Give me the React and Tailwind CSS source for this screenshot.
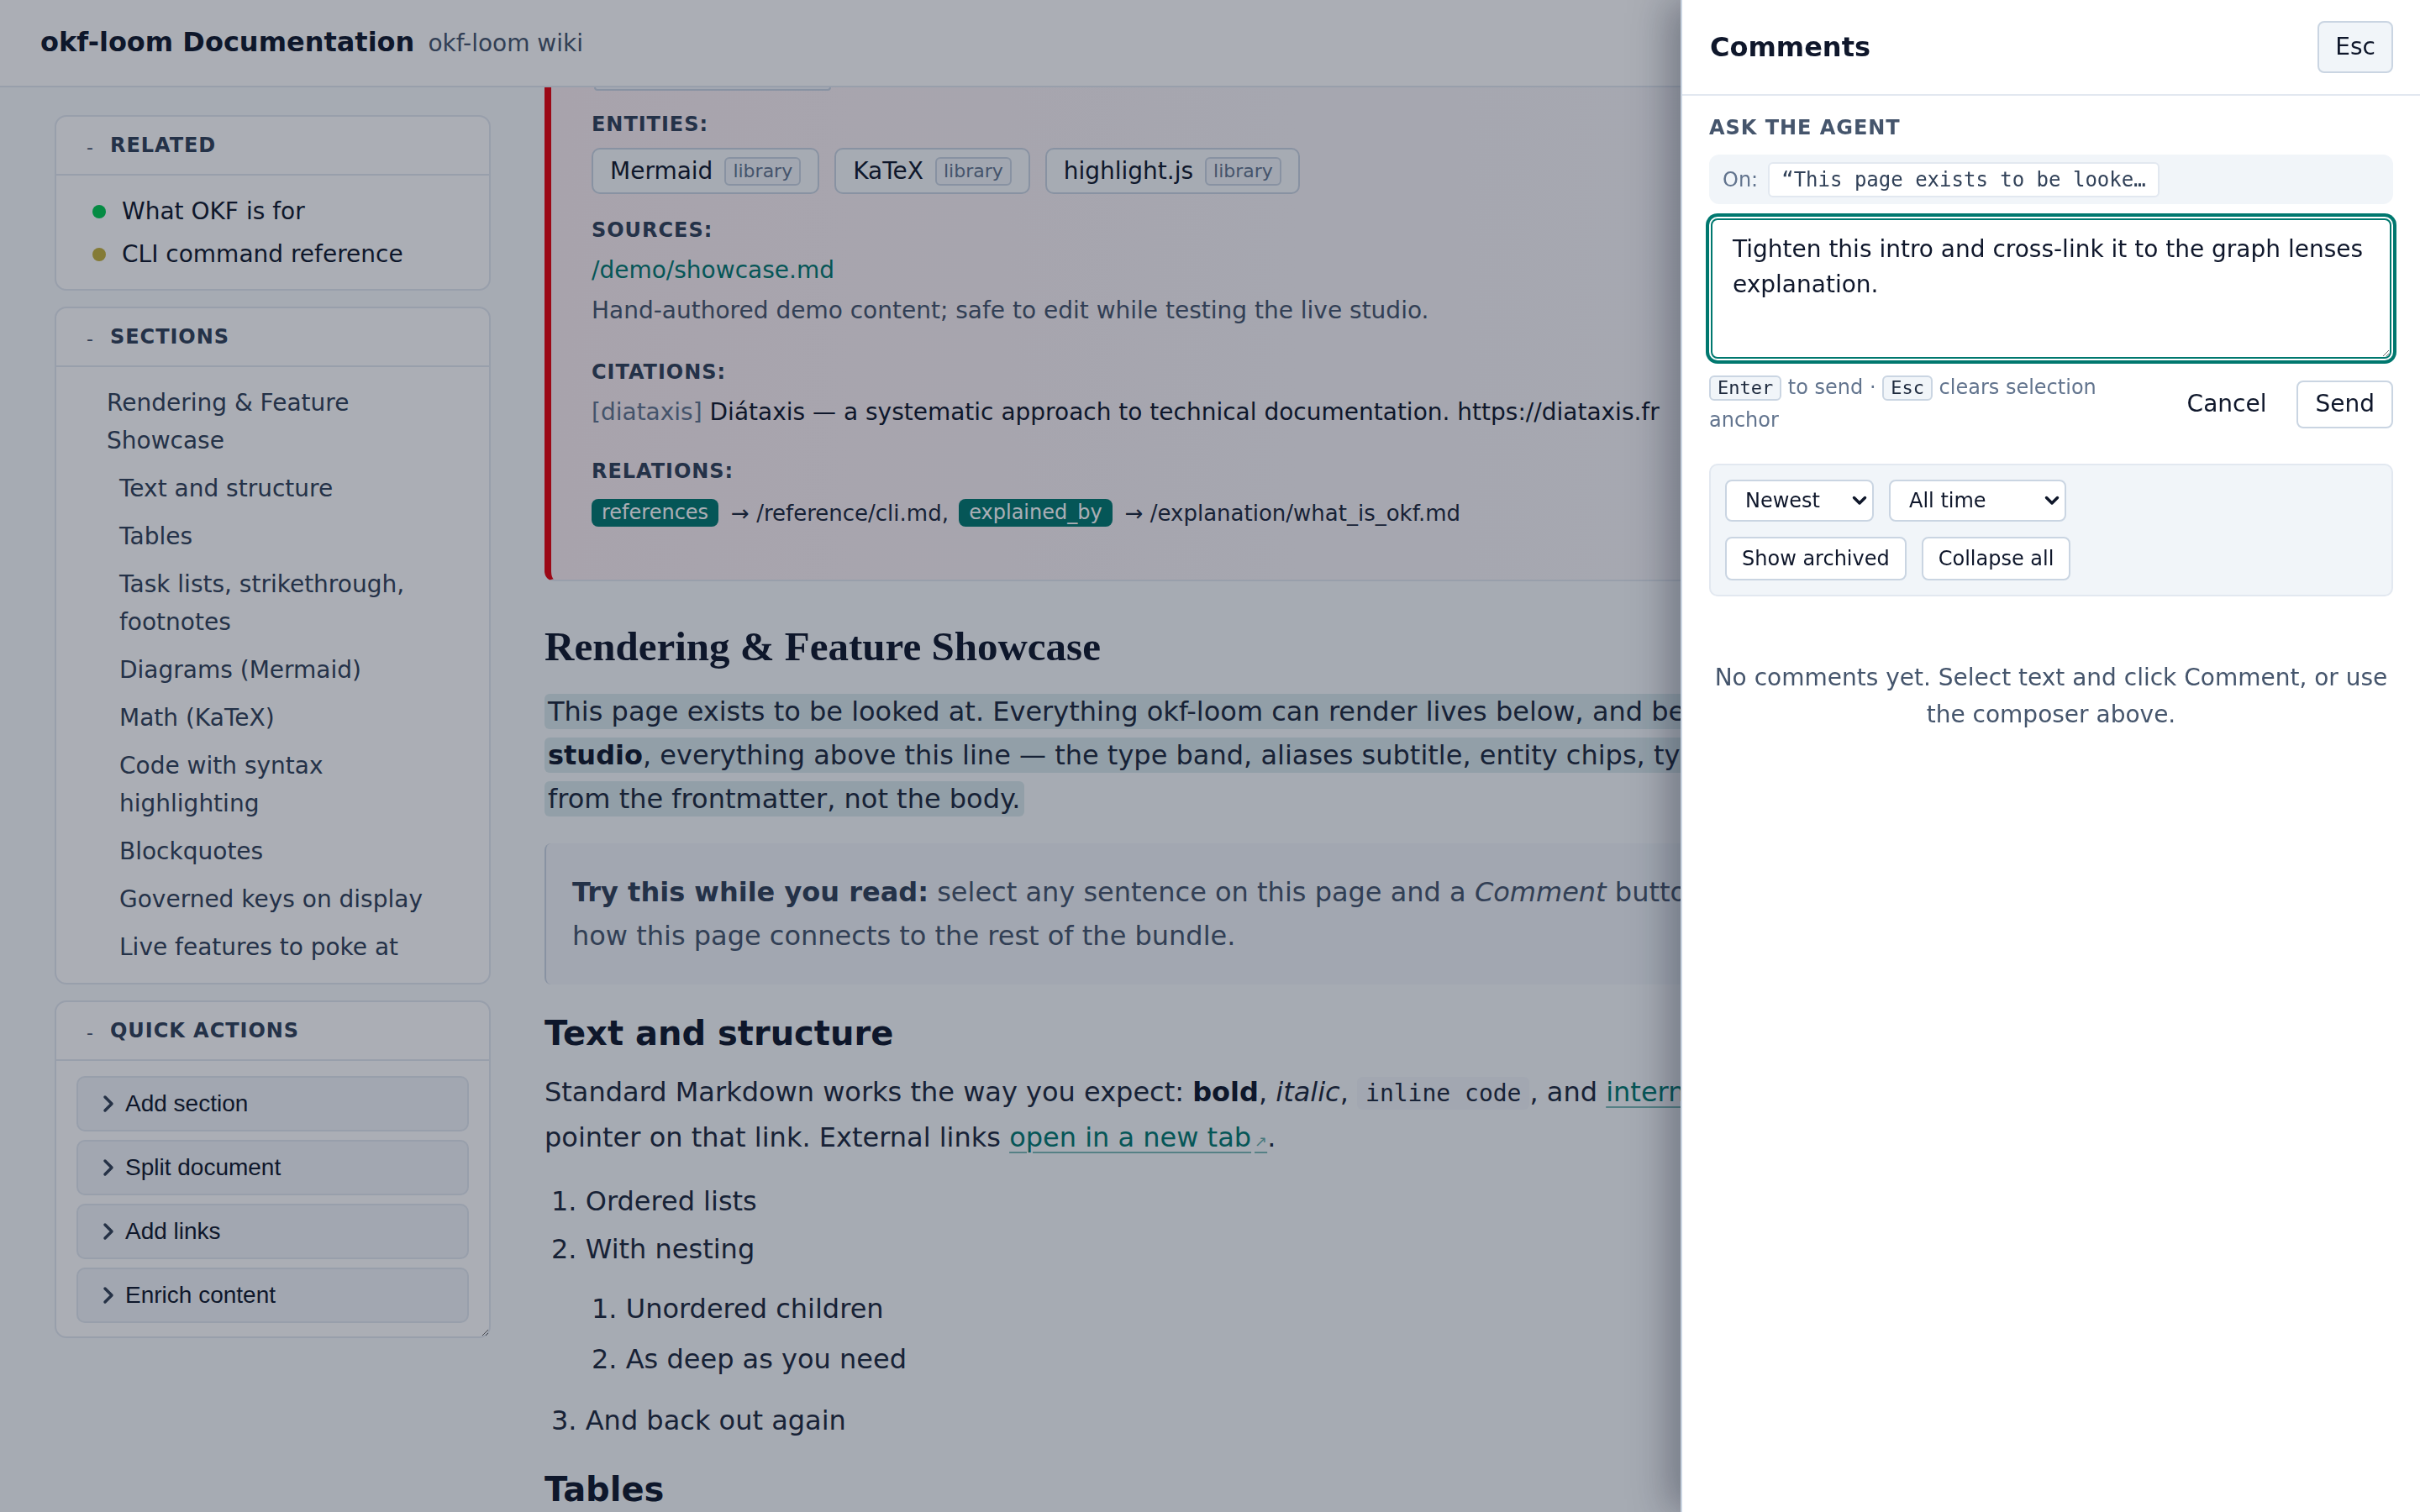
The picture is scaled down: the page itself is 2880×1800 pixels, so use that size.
import React from "react";

function SideCard({ title, children, extra = "" }) {
  return (
    <section className={"rounded-[14px] border-2 border-slate-200 bg-white " + extra}>
      <div className="flex h-[70px] items-center gap-[20px] border-b-2 border-slate-200 pl-[36px]">
        <span className="translate-y-[3px] text-[22px] leading-none text-slate-600">-</span>
        <span className="text-[24px] font-bold uppercase leading-[32px] tracking-[0.04em] text-slate-700">{title}</span>
      </div>
      {children}
    </section>
  );
}

function Chevron() {
  return (
    <svg width="16" height="24" viewBox="0 0 16 24" className="shrink-0">
      <path d="M4 4l8 8-8 8" fill="none" stroke="#334155" strokeWidth="3.5" strokeLinecap="round" strokeLinejoin="round" />
    </svg>
  );
}

function QuickButton({ label }) {
  return (
    <button className="flex h-[66px] w-full items-center gap-[12px] rounded-[10px] border-2 border-slate-200 bg-slate-100 pl-[28px] text-left font-['Liberation_Sans',Arial,sans-serif] text-[28px] text-slate-900">
      <Chevron />
      <span>{label}</span>
    </button>
  );
}

function EntityChip({ name }) {
  return (
    <div className="flex h-[55px] items-center gap-[14px] rounded-[10px] border-2 border-slate-300 bg-slate-50 px-[20px]">
      <span className="text-[28px] leading-[40px] text-slate-900">{name}</span>
      <span className="rounded-[6px] border-2 border-slate-300 bg-slate-100 px-[8px] text-[22px] leading-[30px] text-slate-500">library</span>
    </div>
  );
}

function Label({ children, extra = "" }) {
  return (
    <div className={"text-[24px] font-bold uppercase leading-[32px] tracking-[0.04em] text-slate-700 " + extra}>{children}</div>
  );
}

function SelectBox({ width, options }) {
  return (
    <div className="relative">
      <select className={"h-[50px] appearance-none rounded-[8px] border-2 border-slate-300 bg-white pl-[22px] text-[24px] text-slate-900 " + width}>
        {options.map((o) => (
          <option key={o}>{o}</option>
        ))}
      </select>
      <svg
        width="18"
        height="12"
        viewBox="0 0 18 12"
        className="pointer-events-none absolute right-[8px] top-1/2 -translate-y-1/2"
      >
        <path d="M2.5 2.5l6.5 6.5 6.5-6.5" fill="none" stroke="#0f172a" strokeWidth="3.5" strokeLinecap="round" strokeLinejoin="round" />
      </svg>
    </div>
  );
}

export default function App() {
  const sections = [
    { t: "Rendering & Feature Showcase", top: true },
    { t: "Text and structure" },
    { t: "Tables" },
    { t: "Task lists, strikethrough, footnotes" },
    { t: "Diagrams (Mermaid)" },
    { t: "Math (KaTeX)" },
    { t: "Code with syntax highlighting" },
    { t: "Blockquotes" },
    { t: "Governed keys on display" },
    { t: "Live features to poke at" },
  ];

  return (
    <div className="relative h-screen w-full overflow-hidden bg-slate-50 font-['DejaVu_Sans',sans-serif] text-slate-800">
      {/* Top bar */}
      <header className="flex h-[104px] items-center border-b-2 border-slate-200 bg-white px-[48px]">
        <div className="flex items-baseline gap-[16px]">
          <h1 className="text-[32px] font-bold leading-[40px] text-slate-900">okf-loom Documentation</h1>
          <span className="text-[28px] leading-[40px] text-slate-600">okf-loom wiki</span>
        </div>
      </header>

      <div className="flex">
        {/* Sidebar */}
        <aside className="flex w-[584px] shrink-0 flex-col gap-[19px] pl-[65px] pt-[33px]">
          <SideCard title="Related">
            <ul className="flex flex-col gap-[6px] pb-[19px] pl-[43px] pt-[20px]">
              <li className="flex items-center gap-[19px] text-[28px] leading-[45px] text-slate-900">
                <span className="h-[16px] w-[16px] rounded-full bg-green-500" />
                What OKF is for
              </li>
              <li className="flex items-center gap-[19px] text-[28px] leading-[45px] text-slate-900">
                <span className="h-[16px] w-[16px] rounded-full bg-[#c4b13c]" />
                CLI command reference
              </li>
            </ul>
          </SideCard>

          <SideCard title="Sections">
            <ul className="flex flex-col pb-[14px] pl-[60px] pr-[41px] pt-[14px] text-[28px] leading-[45px] text-slate-700">
              {sections.map((s) => (
                <li key={s.t} className={s.top ? "py-[6px]" : "py-[6px] pl-[15px]"}>
                  {s.t}
                </li>
              ))}
            </ul>
          </SideCard>

          <SideCard title="Quick actions" extra="resize-y overflow-hidden">
            <div className="flex flex-col gap-[10px] px-[24px] pb-[16px] pt-[18px]">
              <QuickButton label="Add section" />
              <QuickButton label="Split document" />
              <QuickButton label="Add links" />
              <QuickButton label="Enrich content" />
            </div>
          </SideCard>
        </aside>

        {/* Main article */}
        <main className="min-w-0 flex-1 pl-[64px] pr-[96px]">
          <div className="rounded-bl-[12px] border-b-2 border-l-8 border-slate-200 border-l-red-600 bg-linear-to-r from-[#fbeff2] via-[#f7f5f8] to-[#f8fafc] pb-[55px] pl-[48px]">
            <div className="ml-[3px] h-[4px] w-[282px] rounded-b-[8px] border-2 border-t-0 border-slate-300 bg-slate-100" />
            <Label extra="mt-[24px]">Entities:</Label>
            <div className="mt-[12px] flex gap-[18px]">
              <EntityChip name="Mermaid" />
              <EntityChip name="KaTeX" />
              <EntityChip name="highlight.js" />
            </div>

            <Label extra="mt-[27px]">Sources:</Label>
            <div className="mt-[8px] text-[28px] leading-[48px] text-teal-700">/demo/showcase.md</div>
            <div className="text-[28px] leading-[48px] text-slate-600">
              Hand-authored demo content; safe to edit while testing the live studio.
            </div>

            <Label extra="mt-[33px]">Citations:</Label>
            <div className="mt-[8px] whitespace-nowrap text-[28px] leading-[48px] text-slate-900">
              <span className="text-slate-500">[diataxis]</span> Diátaxis — a systematic approach to technical documentation. https://diataxis.fr
            </div>

            <Label extra="mt-[30px]">Relations:</Label>
            <div className="mt-[8px] whitespace-nowrap text-[26px] leading-[48px] text-slate-800">
              <span className="inline-block rounded-[8px] bg-teal-700 px-[12px] align-middle text-[24px] leading-[33px] text-white">references</span>
              <span className="ml-[15px] align-middle">→ /reference/cli.md, </span>
              <span className="ml-[4px] inline-block rounded-[8px] bg-teal-700 px-[12px] align-middle text-[24px] leading-[33px] text-white">explained_by</span>
              <span className="ml-[15px] align-middle">→ /explanation/what_is_okf.md</span>
            </div>
          </div>

          <h1 className="mt-[49px] font-['Liberation_Serif','Times_New_Roman',serif] text-[49px] font-bold leading-[58px] text-slate-900">
            Rendering &amp; Feature Showcase
          </h1>

          <p className="mt-[22px] whitespace-nowrap text-[32px] leading-[52px] text-slate-800">
            <span className="rounded-[6px] bg-[#d9e8eb] py-[2px] pl-[4px] pr-[2px]">
              This page exists to be looked at. Everything okf-loom can render lives below, and because it opens in the live
            </span>
            <br />
            <span className="rounded-[6px] bg-[#d9e8eb] py-[2px] pl-[4px] pr-[2px]">
              <strong className="font-bold text-slate-900">studio</strong>, everything above this line — the type band, aliases subtitle, entity chips, type chips — comes
            </span>
            <br />
            <span className="rounded-[6px] bg-[#d9e8eb] py-[2px] pl-[4px] pr-[4px]">from the frontmatter, not the body.</span>
          </p>

          <blockquote className="mt-[27px] whitespace-nowrap rounded-[8px] border-l-2 border-slate-300 bg-slate-100 px-[31px] py-[32px] text-[32px] leading-[52px] text-slate-600">
            <strong className="font-bold text-slate-700">Try this while you read:</strong> select any sentence on this page and a{" "}
            <em>Comment</em> button appears; the sidebar shows
            <br />
            how this page connects to the rest of the bundle.
          </blockquote>

          <h2 className="mt-[32px] text-[40px] font-bold leading-[52px] text-slate-900">Text and structure</h2>

          <p className="mt-[18px] whitespace-nowrap text-[32px] leading-[52px] text-slate-800">
            Standard Markdown works the way you expect: <strong className="font-bold text-slate-900">bold</strong>, <em>italic</em>,{" "}
            <code className="rounded-[6px] bg-slate-100 px-[10px] py-[3px] font-['DejaVu_Sans_Mono',monospace] text-[28px] text-slate-800">inline code</code>, and{" "}
            <a className="text-teal-700 underline decoration-teal-700/50 decoration-2 underline-offset-[6px]">internal links</a> preview when you rest the
            <br />
            pointer on that link. External links{" "}
            <a className="text-teal-700 underline decoration-teal-700/50 decoration-2 underline-offset-[6px]">
              open in a new tab<span className="ml-[4px] text-[18px] text-teal-700/60">↗</span>
            </a>
            .
          </p>

          <ol className="mt-[19px] list-inside list-decimal space-y-[5px] pl-[8px] text-[32px] leading-[52px] text-slate-800">
            <li>Ordered lists</li>
            <li>
              With nesting
              <ol className="mb-[21px] mt-[19px] list-inside list-decimal space-y-[8px] pl-[48px]">
                <li>Unordered children</li>
                <li>As deep as you need</li>
              </ol>
            </li>
            <li>And back out again</li>
          </ol>

          <h2 className="mt-[30px] text-[40px] font-bold leading-[52px] text-slate-900">Tables</h2>
        </main>
      </div>

      {/* Modal backdrop */}
      <div className="fixed inset-0 bg-[rgba(15,23,42,0.35)]" />

      {/* Comments drawer */}
      <aside className="fixed right-0 top-0 flex h-screen w-[880px] flex-col border-l-2 border-slate-300 bg-white shadow-[-14px_0_44px_rgba(15,23,42,0.35)]">
        <div className="flex h-[114px] shrink-0 items-center justify-between border-b-2 border-slate-200 px-[32px]">
          <h2 className="pl-[1px] text-[32px] font-bold leading-[40px] text-slate-900">Comments</h2>
          <button className="h-[62px] rounded-[8px] border-2 border-slate-300 bg-slate-100 px-[19px] text-[28px] text-slate-900">Esc</button>
        </div>

        <div className="px-[32px]">
          <div className="mt-[22px] text-[24px] font-bold uppercase leading-[32px] tracking-[0.04em] text-slate-600">Ask the agent</div>

          <div className="mt-[16px] flex h-[59px] items-center gap-[12px] rounded-[12px] bg-slate-100 px-[16px]">
            <span className="text-[24px] text-slate-500">On:</span>
            <span className="flex h-[42px] items-center rounded-[6px] border-2 border-slate-200 bg-white px-[14px] font-['DejaVu_Sans_Mono',monospace] text-[24px] text-slate-700">
              “This page exists to be looke…
            </span>
          </div>

          <div className="mt-[17px] px-[2px]">
            <textarea
              className="block h-[167px] w-full rounded-[8px] border-2 border-teal-700 bg-white px-[24px] py-[14px] text-[28px] leading-[42px] text-slate-900 outline-none ring-4 ring-teal-700 ring-offset-2 ring-offset-white"
              defaultValue="Tighten this intro and cross-link it to the graph lenses explanation."
            />
          </div>

          <div className="mt-[15px] flex items-center gap-[24px]">
            <div className="min-w-0 flex-1 text-[24px] leading-[39px] text-slate-500">
              <kbd className="inline-block rounded-[6px] border-2 border-slate-300 bg-slate-100 px-[8px] font-['DejaVu_Sans_Mono',monospace] text-[22px] leading-[26px] text-slate-800">Enter</kbd> to send ·{" "}
              <kbd className="inline-block rounded-[6px] border-2 border-slate-300 bg-slate-100 px-[8px] font-['DejaVu_Sans_Mono',monospace] text-[22px] leading-[26px] text-slate-800">Esc</kbd> clears selection anchor
            </div>
            <div className="flex shrink-0 items-center gap-[12px]">
              <button className="h-[57px] border-2 border-transparent px-[22px] text-[28px] text-slate-900">Cancel</button>
              <button className="h-[57px] rounded-[8px] border-2 border-slate-300 bg-white px-[20px] text-[28px] text-slate-900">Send</button>
            </div>
          </div>

          <div className="mt-[32px] flex flex-col gap-[18px] rounded-[10px] border-2 border-slate-200 bg-slate-100 p-[17px]">
            <div className="flex gap-[18px]">
              <SelectBox width="w-[177px]" options={["Newest", "Oldest"]} />
              <SelectBox width="w-[211px]" options={["All time", "Last 7 days", "Last 30 days"]} />
            </div>
            <div className="flex gap-[18px]">
              <button className="h-[52px] rounded-[8px] border-2 border-slate-300 bg-white px-[18px] text-[24px] text-slate-900">Show archived</button>
              <button className="h-[52px] rounded-[8px] border-2 border-slate-300 bg-white px-[18px] text-[24px] text-slate-900">Collapse all</button>
            </div>
          </div>

          <p className="mt-[75px] text-center text-[28px] leading-[44px] text-slate-600">
            No comments yet. Select text and click Comment, or use the composer above.
          </p>
        </div>
      </aside>
    </div>
  );
}
